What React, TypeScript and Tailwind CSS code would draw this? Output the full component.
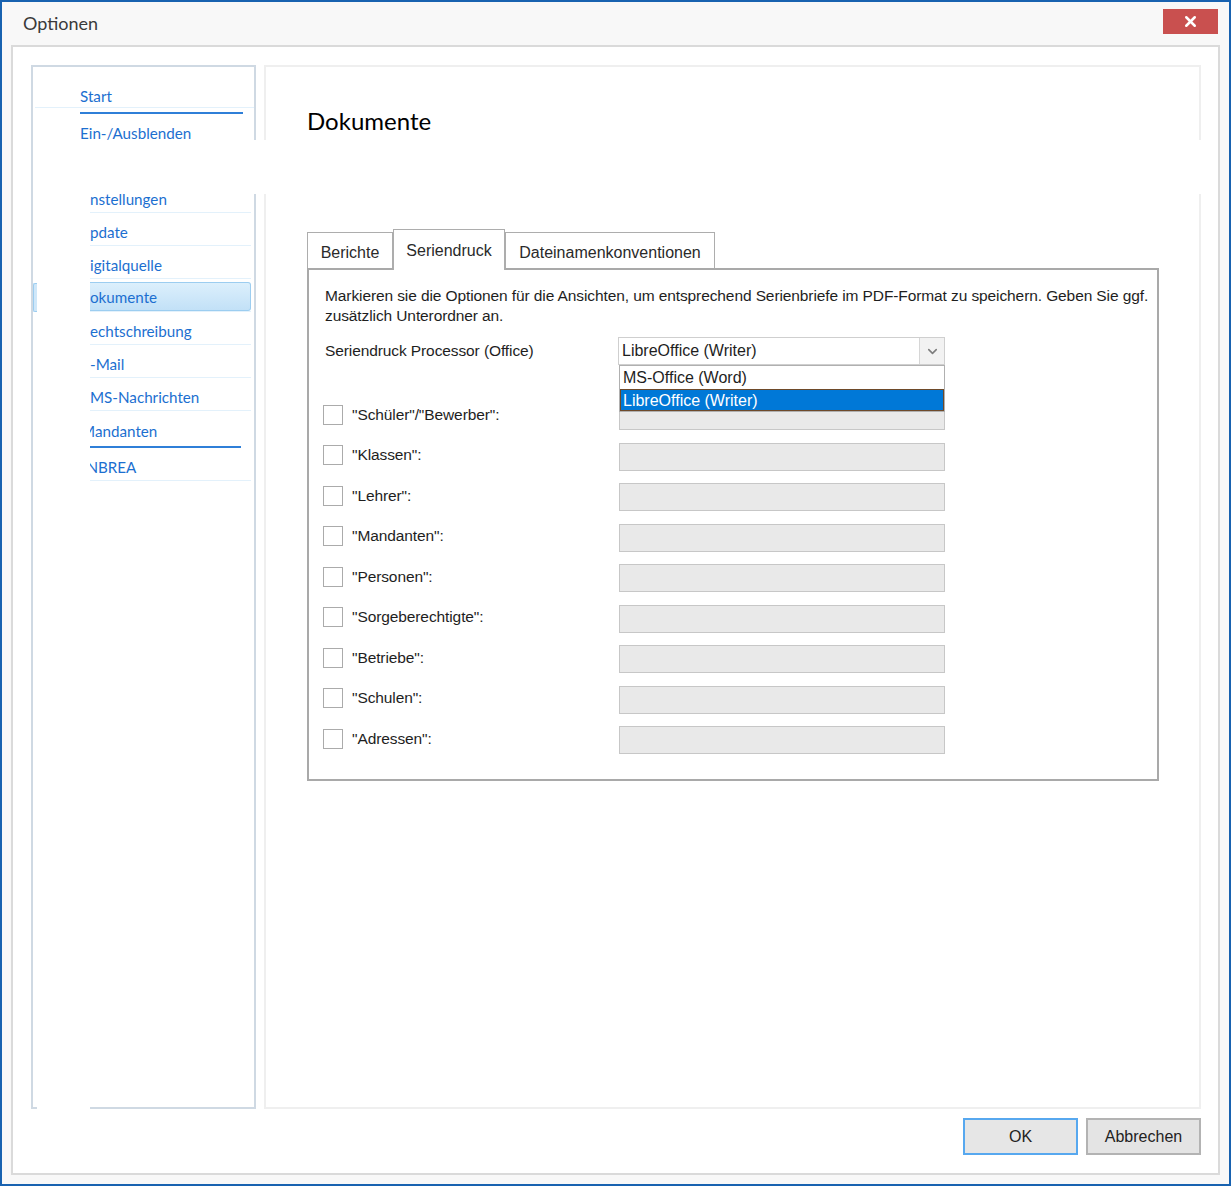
import { ChevronDown, X } from "lucide-react";

const ui = { fontFamily: "Lato, 'Liberation Sans', sans-serif" };
const form = { fontFamily: "'Liberation Sans', Arial, sans-serif" };

// hidden: part of the word cut away by the left edge, keep: px of it still showing
const lowerItems = [
  { hidden: "E", rest: "instellungen".slice(1), keep: 0 },
  { hidden: "U", rest: "pdate", keep: 0 },
  { hidden: "D", rest: "igitalquelle", keep: 0 },
  { hidden: "D", rest: "okumente", keep: 0, sel: true },
  { hidden: "R", rest: "echtschreibung", keep: 0 },
  { hidden: "E", rest: "-Mail", keep: 0 },
  { hidden: "S", rest: "MS-Nachrichten", keep: 0 },
  { hidden: "M", rest: "andanten", keep: 5 },
];

const targets = [
  '"Schüler"/"Bewerber":',
  '"Klassen":',
  '"Lehrer":',
  '"Mandanten":',
  '"Personen":',
  '"Sorgeberechtigte":',
  '"Betriebe":',
  '"Schulen":',
  '"Adressen":',
];

function NavLabel({ hidden, rest, keep }: { hidden: string; rest: string; keep: number }) {
  // the screenshot clips the menu text at its left edge
  return (
    <div className="flex whitespace-nowrap">
      <span className="flex justify-end overflow-hidden" style={{ width: keep }}>
        <span className="shrink-0">{hidden}</span>
      </span>
      <span>{rest}</span>
    </div>
  );
}

function Sidebar() {
  return (
    <div
      className="flex w-[225px] shrink-0 flex-col border-l-2 border-[#cfd9e3] text-[15.2px] leading-[20px] text-[#1c6fd0]"
      style={ui}
    >
      {/* top part */}
      <div className="h-[75px] border-t-2 border-r-2 border-[#cfd9e3] pl-[2px]">
        <div className="flex h-[41px] items-end border-b border-[#e3f1fb] pb-[1px] pl-[45px]">
          Start
        </div>
        <div className="mt-[4px] ml-[45px] mr-[11px] h-[2px] bg-[#2f7fd8]" />
        <div className="mt-[9px] pl-[45px]">Ein-/Ausblenden</div>
      </div>

      {/* blank band */}
      <div className="h-[54px] bg-white" />

      {/* lower part */}
      <div className="flex flex-1 border-r-2 border-[#cfd9e3]">
        <div className="flex w-[4px] flex-col border-b-2 border-[#cfd9e3]">
          <div className="h-[89px]" />
          <div className="h-[29px] rounded-l-[2px] border-y border-l border-[#9ccdf0] bg-[#cfe7f9]" />
        </div>
        <div className="w-[53px] bg-white" />
        <div className="flex flex-1 flex-col border-b-2 border-[#cfd9e3] pr-[3px]">
          {lowerItems.map((it, i) => (
            <div key={it.rest}>
              <div
                className={
                  (i === 0 ? "h-[19px] " : "h-[33px] ") +
                  (i === 7 ? "" : "border-b border-[#e3f1fb] ") +
                  "flex items-end"
                }
              >
                {it.sel ? (
                  <div className="flex h-[29px] w-full items-center rounded-r-[3px] border-y border-r border-[#9ccdf0] bg-gradient-to-b from-[#dcefFc] to-[#c2e1f7] pt-[1px]">
                    <NavLabel {...it} />
                  </div>
                ) : (
                  <div className="pb-[3px]">
                    <NavLabel {...it} />
                  </div>
                )}
              </div>
              {i === 7 && <div className="mt-[2px] mr-[10px] h-[2px] bg-[#2f7fd8]" />}
            </div>
          ))}
          <div className="flex h-[33px] items-end border-b border-[#e3f1fb] pb-[3px]">
            <NavLabel hidden="EN" rest="BREA" keep={8} />
          </div>
        </div>
      </div>
    </div>
  );
}

function Checkbox() {
  return <div className="h-[20px] w-[20px] shrink-0 border border-[#ababab] bg-white" />;
}

function SeriendruckPanel() {
  return (
    <div
      className="h-[513px] w-[852px] border-2 border-[#a9a9a9] bg-white pl-[16px] pt-[16px] text-[15.5px] leading-[20px] tracking-[-0.1px] text-[#1e1e1e]"
      style={form}
    >
      <p className="pr-[8px]">
        Markieren sie die Optionen für die Ansichten, um entsprechend Serienbriefe im PDF-Format zu
        speichern. Geben Sie ggf. zusätzlich Unterordner an.
      </p>

      <div className="mt-[11px] flex items-center">
        <div className="w-[293px]">Seriendruck Processor (Office)</div>
        <div className="relative text-[16px] tracking-normal">
          <div className="flex h-[28px] w-[327px] items-center border border-[#cfcfcf] bg-white">
            <div className="flex-1 pl-[3px]">LibreOffice (Writer)</div>
            <div className="flex h-full w-[25px] items-center justify-center border-l border-[#d6d6d6] bg-[#f2f2f2]">
              <ChevronDown size={15} strokeWidth={2.5} className="text-[#7d7d7d]" />
            </div>
          </div>
          <div className="absolute left-[1px] top-[28px] z-10 w-[326px] border border-[#b0b0b0] bg-white">
            <div className="h-[23px] pl-[3px] pt-[2px]">MS-Office (Word)</div>
            <div className="h-[22px] border border-[#6e4a2a] bg-[#0078d7] pl-[2px] pt-[1px] text-white">
              LibreOffice (Writer)
            </div>
          </div>
        </div>
      </div>

      <div className="mt-[37px] flex flex-col gap-[12.5px]">
        {targets.map((t) => (
          <div key={t} className="flex items-center">
            <div className="-ml-[2px] mb-[3px] flex w-[296px] items-center gap-[9px]">
              <Checkbox />
              <span>{t}</span>
            </div>
            <div className="h-[28px] w-[326px] border border-[#c7c7c7] bg-[#e9e9e9]" />
          </div>
        ))}
      </div>
    </div>
  );
}

function ContentPanel() {
  return (
    <div className="flex w-[937px] shrink-0 flex-col">
      <div className="h-[75px] border-x-2 border-t-2 border-[#efefef] pl-[41px] pt-[38px]">
        <h1 className="text-[24px] leading-[32px] text-black" style={ui}>
          Dokumente
        </h1>
      </div>
      <div className="h-[54px] bg-white" />
      <div className="flex-1 border-x-2 border-b-2 border-[#efefef] pl-[41px] pt-[35px]">
        <div className="flex items-end text-[16px] text-[#2a2a2a]" style={form}>
          <div className="flex h-[36px] w-[86px] items-center justify-center border border-b-0 border-[#adadad] bg-white pt-[4px]">
            Berichte
          </div>
          <div className="relative z-10 -mb-[2px] flex h-[41px] w-[112px] items-center justify-center border-x border-t border-[#adadad] bg-white pt-[2px]">
            Seriendruck
          </div>
          <div className="flex h-[36px] w-[210px] items-center justify-center border border-b-0 border-[#adadad] bg-white pt-[4px]">
            Dateinamenkonventionen
          </div>
        </div>
        <SeriendruckPanel />
      </div>
    </div>
  );
}

export default function App() {
  return (
    <div className="flex h-[1186px] w-[1231px] flex-col border-2 border-[#1862b0] bg-[#f8f8f8]">
      <div className="flex h-[43px] shrink-0 items-center justify-between pl-[21px] pr-[11px]" style={ui}>
        <span className="text-[18px] text-[#3a3a3a]">Optionen</span>
        <button className="mb-[4px] flex h-[25px] w-[55px] items-center justify-center bg-[#c9504f]">
          <X size={17} strokeWidth={3.5} className="text-white" />
        </button>
      </div>

      <div className="mx-[9px] mb-[9px] flex flex-1 flex-col border-2 border-[#dadada] bg-white">
        <div className="flex h-[1062px] gap-[8px] pl-[18px] pt-[18px]">
          <Sidebar />
          <ContentPanel />
        </div>
        <div className="mt-[9px] flex justify-end gap-[8px] pr-[17px] text-[16px] text-[#222]" style={form}>
          <button className="h-[37px] w-[115px] border-2 border-[#57a8ef] bg-[#e6e6e6]">OK</button>
          <button className="h-[37px] w-[115px] border-2 border-[#b3b3b3] bg-[#e4e4e4]">Abbrechen</button>
        </div>
      </div>
    </div>
  );
}
